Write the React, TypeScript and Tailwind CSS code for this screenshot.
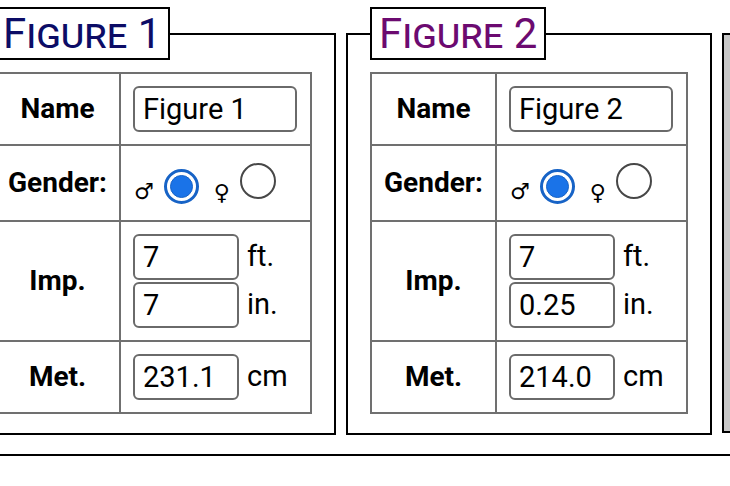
import { useState } from "react";

type Figure = {
  title: string;
  color: string;
  feet: string;
  inches: string;
  cm: string;
};

const figures: Figure[] = [
  { title: "Figure 1", color: "text-[#0c0c66]", feet: "7", inches: "7", cm: "231.1" },
  { title: "Figure 2", color: "text-[#6c0a70]", feet: "7", inches: "0.25", cm: "214.0" },
];

const Radio = ({ checked, onClick }: { checked: boolean; onClick: () => void }) =>
  checked ? (
    <button
      onClick={onClick}
      className="w-[35px] h-[35px] rounded-full border-[3px] border-[#1763c6] bg-white flex items-center justify-center"
    >
      <span className="w-[23px] h-[23px] rounded-full bg-[#1a73e8] border border-[#1763c6]" />
    </button>
  ) : (
    <button
      onClick={onClick}
      className="w-[36px] h-[36px] rounded-full border-2 border-[#474747] bg-white"
    />
  );

const inputClass =
  "h-[46px] border-2 border-[#6a6a6a] rounded-[6px] px-[8px] text-[29px] text-black outline-none bg-white";

const FigureCard = ({ figure }: { figure: Figure }) => {
  const [gender, setGender] = useState<"m" | "f">("m");

  return (
    <fieldset className="w-[366px] shrink-0 border-2 border-black px-[22px] pt-[12px] pb-[19px]">
      <legend
        className={`border-2 border-black px-[7px] text-[42px] leading-[49px] [font-variant:small-caps] ${figure.color}`}
      >
        {figure.title}
      </legend>
      <table className="border-collapse w-[318px] table-fixed">
        <tbody>
          <tr className="h-[72px]">
            <th className="w-[125px] border-2 border-[#707070] text-[28px] font-bold">Name</th>
            <td className="border-2 border-[#707070] pl-[12px]">
              <input className={`${inputClass} w-[164px]`} defaultValue={figure.title} />
            </td>
          </tr>
          <tr className="h-[76px]">
            <th className="border-2 border-[#707070] text-[28px] font-bold">Gender:</th>
            <td className="border-2 border-[#707070] pl-[13px]">
              <div className="flex items-end">
                <span className="text-[22px] leading-none mb-[1px] font-['DejaVu_Sans',sans-serif]">♂</span>
                <span className="ml-[10px]">
                  <Radio checked={gender === "m"} onClick={() => setGender("m")} />
                </span>
                <span className="ml-[15px] text-[22px] leading-none font-['DejaVu_Sans',sans-serif]">♀</span>
                <span className="ml-[10px]">
                  <Radio checked={gender === "f"} onClick={() => setGender("f")} />
                </span>
              </div>
            </td>
          </tr>
          <tr className="h-[120px]">
            <th className="border-2 border-[#707070] text-[28px] font-bold">Imp.</th>
            <td className="border-2 border-[#707070] pl-[12px]">
              <div className="flex flex-col gap-[2px]">
                <div className="flex items-center gap-[8px] text-[29px]">
                  <input className={`${inputClass} w-[106px]`} defaultValue={figure.feet} />
                  ft.
                </div>
                <div className="flex items-center gap-[8px] text-[29px]">
                  <input className={`${inputClass} w-[106px]`} defaultValue={figure.inches} />
                  in.
                </div>
              </div>
            </td>
          </tr>
          <tr className="h-[72px]">
            <th className="border-2 border-[#707070] text-[28px] font-bold">Met.</th>
            <td className="border-2 border-[#707070] pl-[12px]">
              <div className="flex items-center gap-[8px] text-[29px]">
                <input className={`${inputClass} w-[106px]`} defaultValue={figure.cm} />
                cm
              </div>
            </td>
          </tr>
        </tbody>
      </table>
    </fieldset>
  );
};

export default function App() {
  return (
    <div className="w-[730px] h-[486px] overflow-hidden bg-white text-black font-['Roboto',sans-serif]">
      <div className="flex items-start gap-[10px] -ml-[30px] pt-[7px]">
        {figures.map((f) => (
          <FigureCard key={f.title} figure={f} />
        ))}
        <fieldset className="w-[366px] h-[426px] shrink-0 border-2 border-black bg-[#c8c8c8] px-[22px]">
          <legend className="w-[170px] h-[53px] border-2 border-black bg-white" />
        </fieldset>
      </div>
      <div className="mt-[19px] border-t-2 border-black" />
    </div>
  );
}
